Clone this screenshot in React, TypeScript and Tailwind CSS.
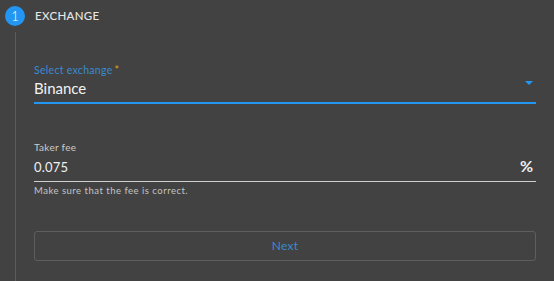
export default function App() {
  return (
    <div className="flex h-[281px] w-[554px] overflow-hidden bg-[#424242] font-['Lato',sans-serif]">
      {/* step rail */}
      <div className="flex w-[30px] shrink-0 flex-col items-center pt-[6px]">
        <div className="flex h-[20px] w-[20px] items-center justify-center rounded-full bg-[#2196f3] text-[13px] leading-none font-light text-white">
          1
        </div>
        <div className="mt-[6px] w-px flex-1 bg-[#5c5c5c]" />
      </div>

      <div className="flex min-w-0 flex-1 flex-col pr-[18px] pl-[4px] pt-[6px]">
        <div className="flex h-[20px] items-center pl-[1px] text-[11.5px] font-medium tracking-[0.3px] text-[#e6e6e6]">
          EXCHANGE
        </div>

        {/* select */}
        <div className="mt-[38px] flex flex-col">
          <div className="text-[10.5px] leading-[12px] tracking-[0.3px] text-[#3a8bd0]">
            Select exchange<span className="ml-[2px] text-[#e3a21a]">*</span>
          </div>
          <div className="mt-[3px] flex items-start justify-between border-b-2 border-[#2196f3] pb-[5px]">
            <span className="text-[15px] leading-[18px] text-[#f2f2f2]">Binance</span>
            <svg className="mt-[2px] mr-[3px]" width="8" height="4" viewBox="0 0 8 4">
              <polygon points="0,0 8,0 4,4" fill="#2196f3" />
            </svg>
          </div>
        </div>

        {/* fee */}
        <div className="mt-[37px] flex flex-col">
          <div className="text-[10px] leading-[12px] tracking-[0.3px] text-[#cacaca]">Taker fee</div>
          <div className="mt-[5px] flex items-baseline justify-between border-b border-[#cfcfcf] pb-[6px]">
            <span className="text-[13px] leading-[16px] tracking-[0.2px] text-[#f0f0f0]">0.075</span>
            <span className="mr-[3px] text-[16px] leading-[16px] font-bold text-[#f0f0f0]">%</span>
          </div>
          <div className="mt-[3px] text-[9.5px] leading-[12px] tracking-[0.5px] text-[#c4c4c4]">
            Make sure that the fee is correct.
          </div>
        </div>

        <button className="mt-[34px] flex h-[30px] w-full items-center justify-center rounded-[3px] border border-[#5e5e5e] text-[12px] tracking-[0.2px] text-[#3a8bd0]">
          Next
        </button>
      </div>
    </div>
  );
}
